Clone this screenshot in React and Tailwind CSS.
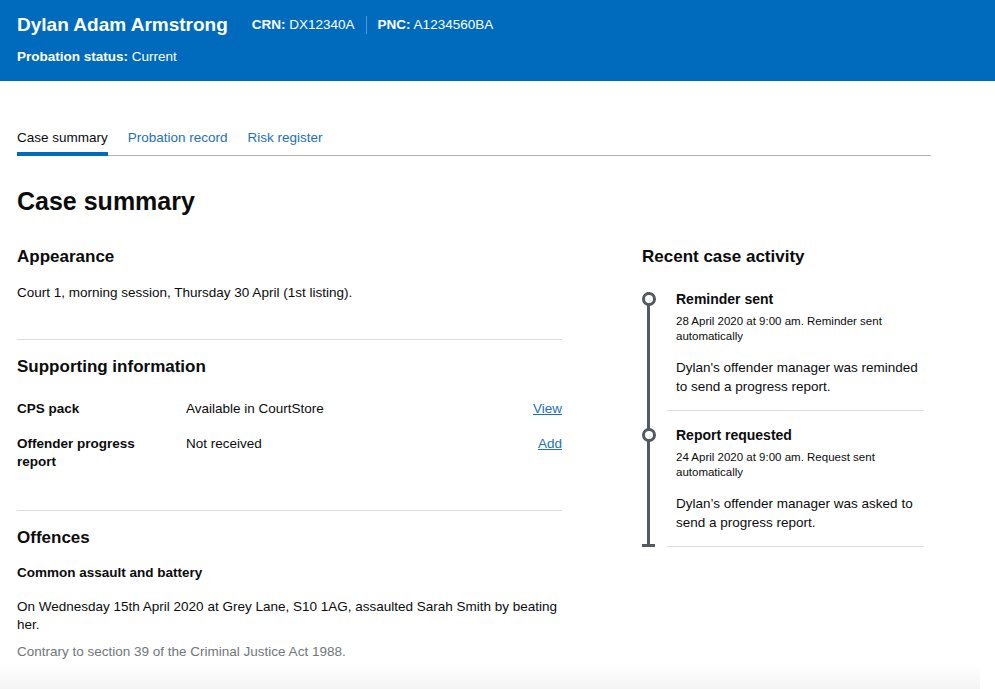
import React from "react";

const font = { fontFamily: '"Liberation Sans", Arial, sans-serif' };

function TimelineItem({ title, date, desc, first }) {
  return (
    <div className={`ml-[-9px] pl-[9px] border-b border-[#dcdcdc] pb-[14px] ${first ? "" : "pt-[14px]"}`}>
      <div className="relative text-[14px] leading-[20px] font-bold text-[#0b0c0c]">
        <span className="absolute left-[-34px] top-[3px] w-[14px] h-[14px] rounded-full border-[3px] border-[#505a5f] bg-white"></span>
        {title}
      </div>
      <div className="mt-[5px] text-[11.5px] leading-[15px] text-[#0b0c0c]">{date}</div>
      <div className="mt-[14px] text-[13.5px] leading-[19px] text-[#0b0c0c]">{desc}</div>
    </div>
  );
}

export default function App() {
  return (
    <div style={font} className="bg-white min-h-[689px] text-[#0b0c0c] relative">
      <header className="bg-[#006bbd] h-[81px] px-[17px] pt-[12px] text-white">
        <div className="flex items-center">
          <h1 className="text-[19px] leading-[25px] font-bold">Dylan Adam Armstrong</h1>
          <div className="ml-[24px] text-[13.5px] leading-[20px]">
            <span className="font-bold">CRN:</span> DX12340A
          </div>
          <div className="mx-[11px] w-px h-[18px] bg-[#4d9bd6]"></div>
          <div className="text-[13.5px] leading-[20px]">
            <span className="font-bold">PNC:</span> A1234560BA
          </div>
        </div>
        <div className="mt-[11px] text-[13.5px] leading-[18px]">
          <span className="font-bold">Probation status:</span> Current
        </div>
      </header>

      <main className="px-[17px]">
        <nav className="mt-[47px] w-[914px] flex gap-[20px] border-b border-[#b1b4b6] text-[13.5px] leading-[20px]">
          <a className="-mb-px pb-[4px] border-b-[4px] border-[#006bbd] text-[#0b0c0c]">Case summary</a>
          <a className="-mb-px pb-[4px] border-b-[4px] border-transparent text-[#1d70b8]">Probation record</a>
          <a className="-mb-px pb-[4px] border-b-[4px] border-transparent text-[#1d70b8]">Risk register</a>
        </nav>

        <h2 className="mt-[29px] text-[25px] leading-[32px] font-bold">Case summary</h2>

        <div className="mt-[27px] flex gap-[80px]">
          <div className="w-[545px]">
            <section className="pb-[36px] border-b border-[#dcdcdc]">
              <h3 className="text-[17px] leading-[25px] font-bold">Appearance</h3>
              <p className="mt-[14px] text-[13.5px] leading-[20px]">
                Court 1, morning session, Thursday 30 April (1st listing).
              </p>
            </section>

            <section className="pt-[14px] pb-[39px] border-b border-[#dcdcdc]">
              <h3 className="text-[17px] leading-[25px] font-bold">Supporting information</h3>
              <div className="mt-[21px] flex text-[13.5px] leading-[18px]">
                <div className="w-[169px] pr-[20px] font-bold">CPS pack</div>
                <div className="flex-1">Available in CourtStore</div>
                <a className="text-[#1d70b8] underline">View</a>
              </div>
              <div className="mt-[17px] flex text-[13.5px] leading-[18px]">
                <div className="w-[169px] pr-[30px] font-bold">Offender progress report</div>
                <div className="flex-1">Not received</div>
                <a className="text-[#1d70b8] underline">Add</a>
              </div>
            </section>

            <section className="pt-[14px]">
              <h3 className="text-[17px] leading-[25px] font-bold">Offences</h3>
              <div className="mt-[13px] text-[13.5px] leading-[20px] font-bold">Common assault and battery</div>
              <p className="mt-[15px] text-[13.5px] leading-[18px]">
                On Wednesday 15th April 2020 at Grey Lane, S10 1AG, assaulted Sarah Smith by beating her.
              </p>
              <p className="mt-[9px] text-[13.5px] leading-[18px] text-[#6f777b]">
                Contrary to section 39 of the Criminal Justice Act 1988.
              </p>
            </section>
          </div>

          <div className="w-[282px]">
            <h3 className="text-[17px] leading-[25px] font-bold">Recent case activity</h3>
            <div className="relative mt-[20px] pl-[34px]">
              <div className="absolute left-[5px] top-[3px] bottom-0 w-[3px] bg-[#505a5f]"></div>
              <div className="absolute left-0 bottom-0 w-[13px] h-[3px] bg-[#505a5f]"></div>
              <TimelineItem
                first
                title="Reminder sent"
                date="28 April 2020 at 9:00 am. Reminder sent automatically"
                desc="Dylan's offender manager was reminded to send a progress report."
              />
              <TimelineItem
                title="Report requested"
                date="24 April 2020 at 9:00 am. Request sent automatically"
                desc="Dylan’s offender manager was asked to send a progress report."
              />
            </div>
          </div>
        </div>
      </main>

      <div className="pointer-events-none fixed bottom-0 left-0 w-[980px] h-[24px] bg-gradient-to-b from-transparent to-[#f4f4f4]"></div>
    </div>
  );
}
